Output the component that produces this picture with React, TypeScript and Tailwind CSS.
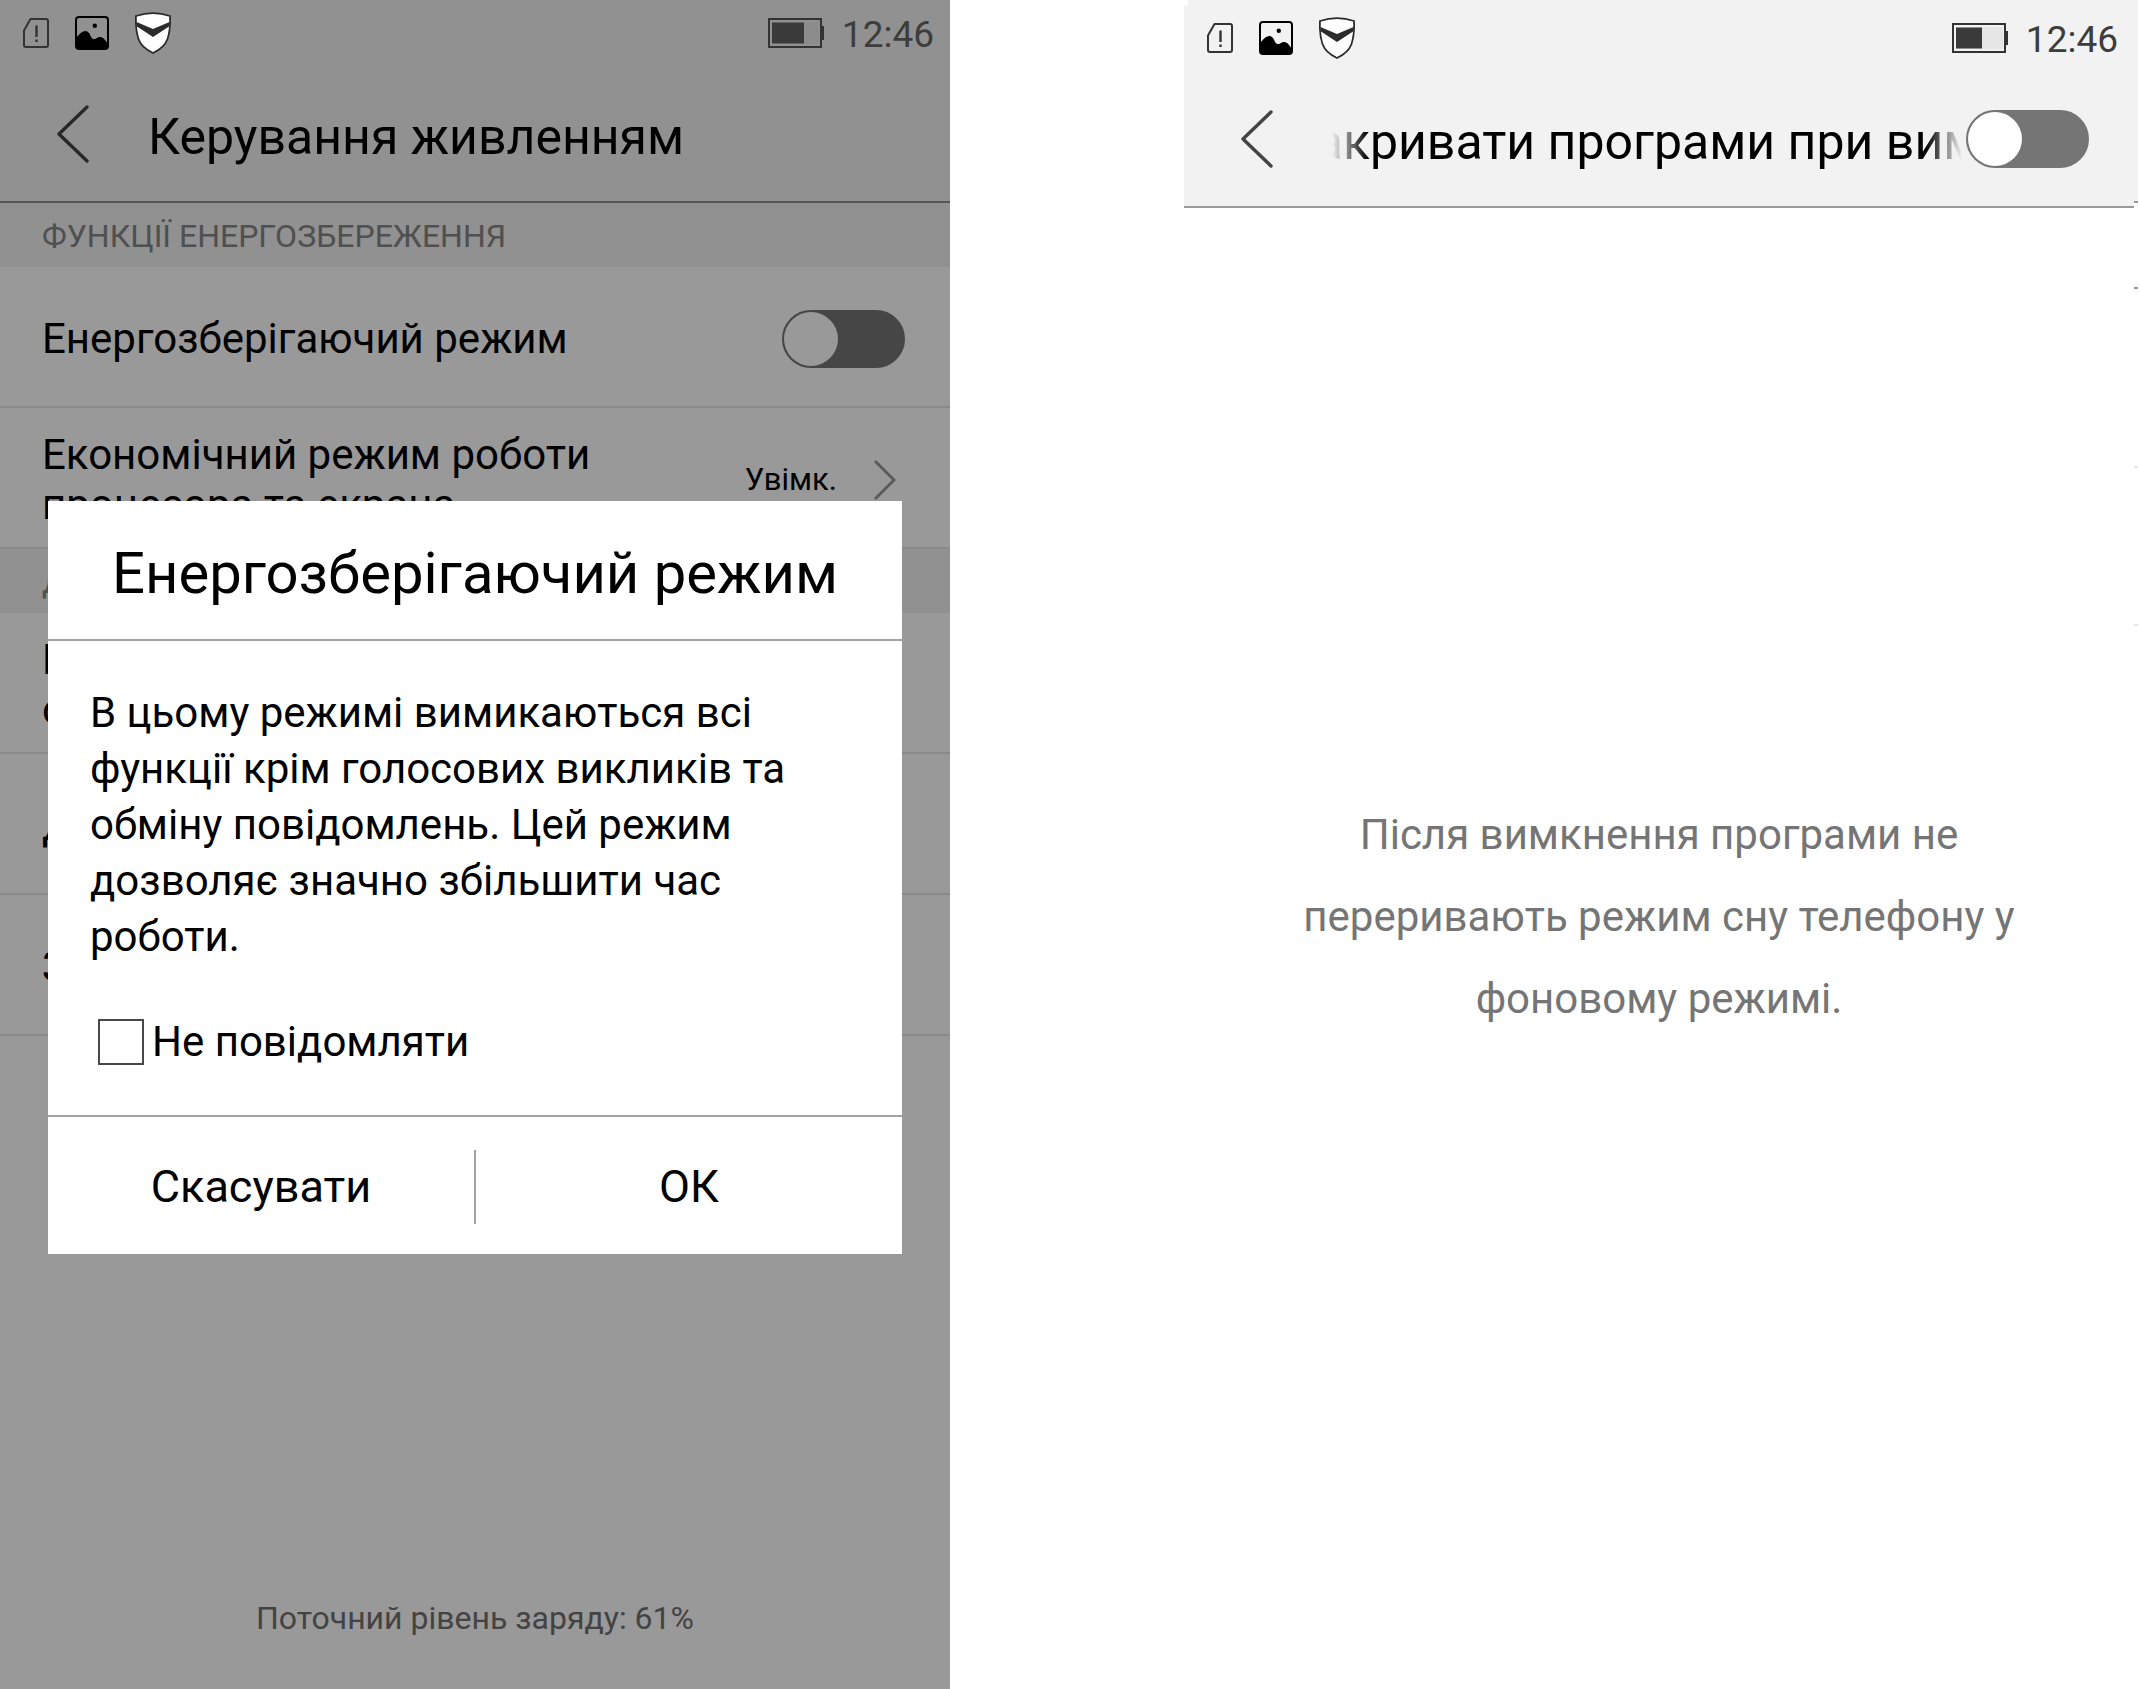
import React, { useState } from 'react';

interface StatusBarProps {
  level: number;
  dimmed?: boolean;
}

function SimIcon() {
  return (
    <svg className="h-[30px] w-[26px]" viewBox="0 0 26 30" fill="none" stroke="#333" strokeWidth="2">
      <path d="M7.5 1H23a2 2 0 0 1 2 2v24a2 2 0 0 1-2 2H3a2 2 0 0 1-2-2V12.5z" strokeLinejoin="round" />
      <path d="M13.5 7.5v11.5M13.5 21.5v2.5" strokeWidth="2.4" />
    </svg>
  );
}

function PictureIcon() {
  return (
    <svg className="h-[34px] w-[34px]" viewBox="0 0 34 34">
      <rect x="1" y="1" width="32" height="32" rx="3" fill="none" stroke="#000" strokeWidth="2" />
      <circle cx="19.8" cy="9.8" r="2.2" />
      <path d="M1 22c3-3 5-7 10-7 5 1 4 8 8 8 3 0 3-2 6-2 4 0 5 4 8 6v6H1z" />
    </svg>
  );
}

function ShieldIcon() {
  return (
    <svg className="h-[42px] w-[36px]" viewBox="0 0 36 42">
      <path d="M1 4C12 .3 24 .3 35 4c.5 9-.5 17-2.500 23C30 34 24.500 38 18 41 11.500 38 6 34 3.500 27 1.500 21 .5 13 1 4z" fill="#fff" stroke="#2b2b2b" strokeWidth="1.8" />
      <path d="M1.500 10 18 17l16.500-7-.5 4.500L18 25 2 14.500z" fill="#2b2b2b" />
    </svg>
  );
}

function BatteryIcon({ level, dimmed }: StatusBarProps) {
  return (
    <svg className="h-[30px] w-[56px]" viewBox="0 0 56 30">
      <rect x="1" y="1" width="52" height="28" fill={dimmed ? '#919191' : '#f2f2f2'} stroke="#333" strokeWidth="2" />
      <rect x="4" y="4" width="47" height="22" fill={dimmed ? '#8c8c8c' : '#e6e6e6'} />
      <rect x="4" y="4.5" width={level} height="21" fill="#3a3a3a" />
      <rect x="53" y="8" width="3" height="14" fill="#333" />
    </svg>
  );
}

function StatusBar({ level, dimmed }: StatusBarProps) {
  return (
    <div className={`relative z-20 flex h-[66px] items-center justify-between pr-4 pl-[23px] ${dimmed ? 'bg-[#919191]' : 'bg-[#f2f2f2]'}`}>
      <div className="flex items-center gap-[26px]">
        <SimIcon />
        <PictureIcon />
        <ShieldIcon />
      </div>
      <div className="flex items-center gap-[18px] text-[37px] leading-[48px] text-[#3d3d3d]">
        <BatteryIcon level={level} dimmed={dimmed} />
        <span className="pt-1">12:46</span>
      </div>
    </div>
  );
}

function BackButton() {
  return (
    <button type="button" aria-label="Назад" className="shrink-0">
      <svg className="h-[58px] w-[32px]" viewBox="0 0 32 58" fill="none" stroke="#444" strokeWidth="3.4" strokeLinecap="round" strokeLinejoin="round">
        <path d="M30 2 2 29l28 27" />
      </svg>
    </button>
  );
}

function Toggle({ label }: { label: string }) {
  const [on, setOn] = useState(false);

  return (
    <input
      type="checkbox"
      role="switch"
      aria-label={label}
      checked={on}
      onChange={() => setOn(!on)}
      className="flex h-[58px] w-[123px] shrink-0 appearance-none items-center rounded-full border-2 border-[#757575] bg-[#757575] before:block before:h-[54px] before:w-[54px] before:rounded-full before:bg-white checked:justify-end checked:bg-green-500"
    />
  );
}

function SectionLabel({ children }: { children: React.ReactNode }) {
  return <h2 className="h-16 truncate bg-[#f2f2f2] px-[42px] pt-[3px] text-[32px] leading-[60px] text-[#858585]">{children}</h2>;
}

function Row({ children }: { children: React.ReactNode }) {
  return (
    <li className="flex h-[141px] items-center justify-between border-b-2 border-[#e6e6e6] pt-1 pr-[45px] pl-[42px] text-[42px] leading-[50px] text-black">
      {children}
    </li>
  );
}

function PowerDialog() {
  const [silent, setSilent] = useState(false);

  return (
    <div className="absolute inset-0 z-10 flex items-center bg-black/40 px-12 pt-[65px]">
      <div role="dialog" aria-labelledby="dialog-title" className="w-full bg-white text-black">
        <h2 id="dialog-title" className="border-b-2 border-[#a3a3a3] pt-9 pb-[30px] text-center text-[58px] leading-[72px]">
          Енергозберігаючий режим
        </h2>
        <div className="px-[42px] pt-11 pb-12 text-[42px]">
          <p className="leading-[56px]">
            В цьому режимі вимикаються всі функції крім голосових викликів та обміну повідомлень. Цей режим дозволяє значно збільшити час роботи.
          </p>
          <label className="mt-[52px] flex items-center gap-2 pl-2 leading-[50px]">
            <input
              type="checkbox"
              checked={silent}
              onChange={() => setSilent(!silent)}
              className="h-[46px] w-[46px] appearance-none border-2 border-[#484848] bg-white checked:bg-gray-600"
            />
            Не повідомляти
          </label>
        </div>
        <div className="flex h-[139px] items-center border-t-2 border-[#a3a3a3] pt-1 text-[45px] leading-[74px]">
          <button type="button" className="flex-1 border-r-2 border-[#a3a3a3]">Скасувати</button>
          <button type="button" className="flex-1">ОК</button>
        </div>
      </div>
    </div>
  );
}

function PowerScreen() {
  return (
    <section className="relative flex min-h-screen min-w-0 flex-col overflow-hidden bg-white">
      <StatusBar level={32} dimmed />
      <header className="flex h-[137px] items-center gap-[59px] border-b-2 border-[#8e8e8e] bg-[#f2f2f2] px-[57px]">
        <BackButton />
        <h1 className="pt-[6px] text-[50px] leading-[64px] text-black">Керування живленням</h1>
      </header>
      <SectionLabel>ФУНКЦІЇ ЕНЕРГОЗБЕРЕЖЕННЯ</SectionLabel>
      <ul>
        <Row>
          <span>Енергозберігаючий режим</span>
          <Toggle label="Енергозберігаючий режим" />
        </Row>
        <Row>
          <span>
            Економічний режим роботи
            <br />
            процесора та екрана
          </span>
          <span className="flex items-center gap-9 pr-2 text-[31px]">
            Увімк.
            <svg className="h-[40px] w-[24px]" viewBox="0 0 24 40" fill="none" stroke="#999" strokeWidth="3">
              <path d="M2 1l19 19L2 39" />
            </svg>
          </span>
        </Row>
      </ul>
      <SectionLabel>ДОДАТКОВО</SectionLabel>
      <ul>
        <Row>
          <span>
            Витрата заряду
            <br />
            окремо
          </span>
        </Row>
        <Row>Діагностика</Row>
        <Row>Закривати програми</Row>
      </ul>
      <p className="mt-auto pb-[51px] text-center text-[32px] leading-[40px] text-[#717171]">Поточний рівень заряду: 61%</p>
      <PowerDialog />
    </section>
  );
}

function CloseAppsScreen() {
  return (
    <section className="flex flex-1 flex-col bg-white">
      <StatusBar level={26} />
      <header className="flex h-[137px] items-center border-b-2 border-[#999] bg-[#f2f2f2] pr-[45px] pl-[57px]">
        <BackButton />
        <h1 className="mr-1 ml-[59px] min-w-0 flex-1 overflow-hidden pt-[6px] -indent-[46px] text-[50px] leading-[64px] whitespace-nowrap text-black [mask-image:linear-gradient(to_right,transparent,black_36px,black_calc(100%-36px),transparent)]">
          Закривати програми при вимкненні
        </h1>
        <Toggle label="Закривати програми при вимкненні" />
      </header>
      <div className="flex flex-1 items-center justify-center px-16 pb-16">
        <p className="text-center text-[42px] leading-[82px] text-[#757575]">
          Після вимкнення програми не
          <br />
          переривають режим сну телефону у
          <br />
          фоновому режимі.
        </p>
      </div>
    </section>
  );
}

export default function App() {
  return (
    <div className="grid min-h-screen grid-cols-[950fr_234fr_954fr_2fr] bg-white font-['Roboto',sans-serif]">
      <PowerScreen />
      <div />
      <div className="flex min-w-0">
        <div className="flex min-w-0 flex-1 flex-col">
          <div className="ml-1 h-[5px] bg-[#f2f2f2]" />
          <CloseAppsScreen />
        </div>
        {/* edge of the next screen in the stack */}
        <div className="w-1">
          <div className="h-[203px] border-b-2 border-[#999] bg-[#f2f2f2]" />
          <div className="h-[86px] border-b-2 border-[#999]" />
          <div className="h-[179px] border-b-2 border-[#e6e6e6]" />
          <div className="h-[158px] border-b-2 border-[#e6e6e6]" />
        </div>
      </div>
      <div />
    </div>
  );
}
